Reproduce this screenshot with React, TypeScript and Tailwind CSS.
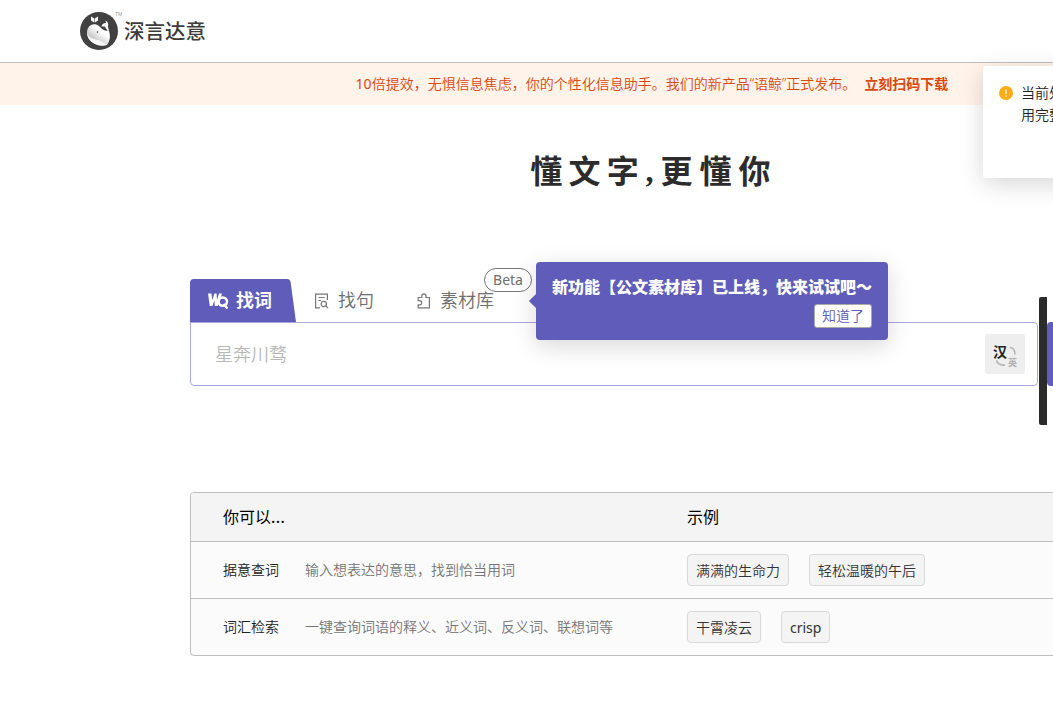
import type { ReactNode } from "react";

const EXAMPLES = [
  { name: "据意查词", desc: "输入想表达的意思，找到恰当用词", tags: ["满满的生命力", "轻松温暖的午后"] },
  { name: "词汇检索", desc: "一键查询词语的释义、近义词、反义词、联想词等", tags: ["干霄凌云", "crisp"] },
];

export default function App() {
  return (
    <div className="relative h-[727px] w-[1053px] overflow-hidden bg-white font-['Noto_Sans','Noto_Sans_CJK_SC',sans-serif] text-sm font-[350] text-[#222]">
      <div className="w-[1304px]">
        <Header />
        <Banner />
        <main className="pl-[190px]">
          <Slogan />
          <Tabs />
          <SearchBar />
          <ExampleTable />
        </main>
      </div>
      <Notice />
    </div>
  );
}

function Header() {
  return (
    <header className="flex h-[63px] items-center border-b border-[#bfbfbf] pl-20">
      <Whale />
      <span className="relative ml-[6px] text-[20.5px] leading-none font-medium text-[#3c3c3c]">
        深言达意
        <span className="absolute -top-[9px] -left-[9px] font-['Liberation_Sans',sans-serif] text-[5px] font-normal text-[#999]">
          TM
        </span>
      </span>
    </header>
  );
}

function Banner() {
  return (
    <div className="flex h-[42px] items-center justify-center bg-[#fff3ea] text-[#d9480f]">
      <span>
        <span className="font-normal">10</span>
        倍提效，无惧信息焦虑，你的个性化信息助手。我们的新产品“语鲸”正式发布。
      </span>
      <b className="ml-2 font-bold">立刻扫码下载</b>
    </div>
  );
}

function Slogan() {
  return (
    <h1 className="flex h-[132px] pl-[337px] text-[32px] leading-[132px] font-bold text-[#2c2c2c]">
      <span className="flex w-[115px] justify-around">
        <span>懂</span>
        <span>文</span>
        <span>字</span>
      </span>
      <span className="w-[15px] text-center font-['Liberation_Serif',serif]">,</span>
      <span className="flex w-[117px] justify-around">
        <span>更</span>
        <span>懂</span>
        <span>你</span>
      </span>
    </h1>
  );
}

function Tabs() {
  return (
    <div className="mt-[42px] flex h-[43px] text-lg text-[#6e6e6e]">
      <div className="relative flex w-[106px] items-center pl-[18px] font-bold text-white">
        <svg className="absolute inset-0" width="106" height="43" viewBox="0 0 106 43">
          <path d="M0 43V4Q0 0 4 0H97Q100 0 100.6 3L106 43Z" fill="#5f5cba" />
        </svg>
        <WordIcon />
        <span className="relative ml-[7px] pb-0.5">找词</span>
      </div>
      <Tab icon={<SentenceIcon />}>找句</Tab>
      <div className="relative ml-[24px] flex">
        <Tab icon={<PuzzleIcon />}>素材库</Tab>
        <span className="absolute -top-[11px] left-[86px] flex h-6 w-12 items-center justify-center rounded-full border border-[#777] bg-white text-sm font-normal">
          Beta
        </span>
        <Tooltip />
      </div>
    </div>
  );
}

function Tab({ icon, children }: { icon: ReactNode; children: ReactNode }) {
  return (
    <div className="flex items-center pl-[18px]">
      {icon}
      <span className="ml-2 pb-0.5">{children}</span>
    </div>
  );
}

function Tooltip() {
  return (
    <div className="absolute -top-[17px] left-[138px] z-10 flex h-[78px] w-[352px] flex-col items-end rounded-[4px] bg-[#5f5cba] px-4 pt-[13px] shadow-[0_6px_24px_rgba(0,0,0,0.16)]">
      <span className="absolute top-[34px] -left-[5px] size-[10px] rotate-45 bg-[#5f5cba]" />
      <p className="text-base leading-6 font-black whitespace-nowrap text-white">
        新功能【公文素材库】已上线，快来试试吧～
      </p>
      <button className="mt-[5px] h-6 w-[58px] rounded-[3px] border border-[#aaa] bg-white text-sm leading-[22px] font-[350] text-[#5f5cba]">
        知道了
      </button>
    </div>
  );
}

function SearchBar() {
  return (
    <div className="relative flex">
      <div className="flex h-16 w-[848px] items-center justify-between rounded-[4px] rounded-tl-none border border-[#aaa7dc] pr-3 pl-6">
        <span className="text-lg text-[#b8b8b8]">星奔川骛</span>
        <div className="relative size-10 rounded-[3px] bg-[#eee]">
          <span className="absolute top-[11px] left-[8px] text-[14px] leading-none font-bold text-[#222]">汉</span>
          <span className="absolute top-[24px] left-[23px] text-[9px] leading-none font-bold text-[#b0b0b0]">英</span>
          <svg className="absolute inset-0" width="40" height="40" fill="none" stroke="#b5b5b5" strokeWidth="1.7">
            <path d="M25 13.5Q30 14 30 20.5M11.5 26.5Q13 31.5 20 31" />
          </svg>
        </div>
      </div>
      <div className="ml-[9px] h-16 w-24 rounded-[4px] bg-[#5f5cba]" />
      <div className="absolute -top-[25px] left-[849px] h-32 w-2 rounded-l-[2px] bg-[#2b2b2b]" />
    </div>
  );
}

function ExampleTable() {
  return (
    <section className="mt-[106px] w-[924px] rounded-[4px] border border-[#bfbfbf] bg-[#fbfbfb]">
      <div className="flex h-12 items-center rounded-t-[3px] bg-[#f4f4f4] pl-8 text-base font-normal text-black">
        <span className="w-[464px]">
          你可以<span className="font-medium tracking-[0.4px]">...</span>
        </span>
        <span>示例</span>
      </div>
      {EXAMPLES.map((row) => (
        <div key={row.name} className="flex h-[57px] items-center border-t border-[#bfbfbf] pl-8">
          <span className="w-[82px] pb-px">{row.name}</span>
          <span className="w-[382px] pb-px text-[#757575]">{row.desc}</span>
          <div className="flex gap-5">
            {row.tags.map((tag) => (
              <span
                key={tag}
                className={`flex h-8 items-center rounded-[4px] border border-[#d9d9d9] bg-[#f4f4f4] px-2 pt-0.5 text-[#333] ${
                  /^[a-z]+$/i.test(tag) ? "font-normal" : ""
                }`}
              >
                {tag}
              </span>
            ))}
          </div>
        </div>
      ))}
    </section>
  );
}

function Notice() {
  return (
    <aside className="absolute top-[66px] left-[983px] z-20 flex h-28 w-[384px] rounded-[3px] bg-white px-4 pt-4 shadow-[0_6px_24px_rgba(0,0,0,0.16)]">
      <svg className="mt-1 shrink-0" width="14" height="14" viewBox="0 0 14 14">
        <circle cx="7" cy="7" r="7" fill="#faad14" />
        <path d="M7 3.4V8M7 9.4V10.7" stroke="#fff" strokeWidth="1.2" />
      </svg>
      <p className="ml-2 leading-[22px] whitespace-nowrap">
        当前处于未登录状态，登录后可使
        <br />
        用完整功能
      </p>
    </aside>
  );
}

function Whale() {
  return (
    <svg width="38" height="38" viewBox="0 0 38 38">
      <defs>
        <linearGradient id="belly" x1="1" y1="0" x2="0.2" y2="1">
          <stop offset=".4" stopColor="#fff" />
          <stop offset="1" stopColor="#a5a5a5" />
        </linearGradient>
      </defs>
      <circle cx="19" cy="19" r="19" fill="#414141" />
      <path d="M7 21C7 13 14 10 19 14C22 17 25 20 28.5 18C31 23 30 29 27 33C18 35 7 30 7 21Z" fill="url(#belly)" />
      <path d="M7 20C8 26 14 27 18 28C22 29 24 31 27 33C18 36 7 30 7 20Z" fill="#f8f8f8" />
      <path d="M11 4.5L14.2 6.5V10.5L11 8.5ZM18 4.5L14.8 6.5V10.5L18 8.5Z" fill="#fff" />
      <path d="M21.5 14.5Q22 11 26 11L25.5 8.5Q29 10 28 15L29 18.5Q26 18 25 14.5Z" fill="#fff" />
      <circle cx="17.5" cy="20" r=".8" fill="#333" />
    </svg>
  );
}

function WordIcon() {
  return (
    <svg className="relative" width="21" height="18" viewBox="0 0 21 18" fill="none">
      <path d="M0 1.5H3.4L4.4 8L6.4 1.5H8.6L9 8L11 1.5H14L10 14H6.8L6.4 8.5L4.4 14H1.8Z" fill="#fff" />
      <circle cx="14.8" cy="9.6" r="4.2" fill="#5f5cba" stroke="#fff" strokeWidth="2.5" />
      <path d="M15.5 12L19.5 16.5" stroke="#fff" strokeWidth="2.3" />
    </svg>
  );
}

function SentenceIcon() {
  return (
    <svg width="16" height="16" viewBox="0 0 16 16" fill="none" stroke="#777" strokeWidth="1.2">
      <path d="M6 14.8H1.6V1.2H13.4V7M4.5 4.5H10.5M4.5 7.5H7" />
      <circle cx="9.8" cy="11" r="2.7" />
      <path d="M11.8 12.9L14 15.2" />
    </svg>
  );
}

function PuzzleIcon() {
  return (
    <svg width="16" height="16" viewBox="0 0 16 16" fill="none" stroke="#777" strokeWidth="1.2">
      <path d="M2.2 4.5H5.8V3A2.1 2.1 0 0 1 10 3V4.5H13.4V14.8H2.2V11.8H3.6A1.9 1.9 0 0 0 3.6 7.6H2.2Z" />
    </svg>
  );
}
